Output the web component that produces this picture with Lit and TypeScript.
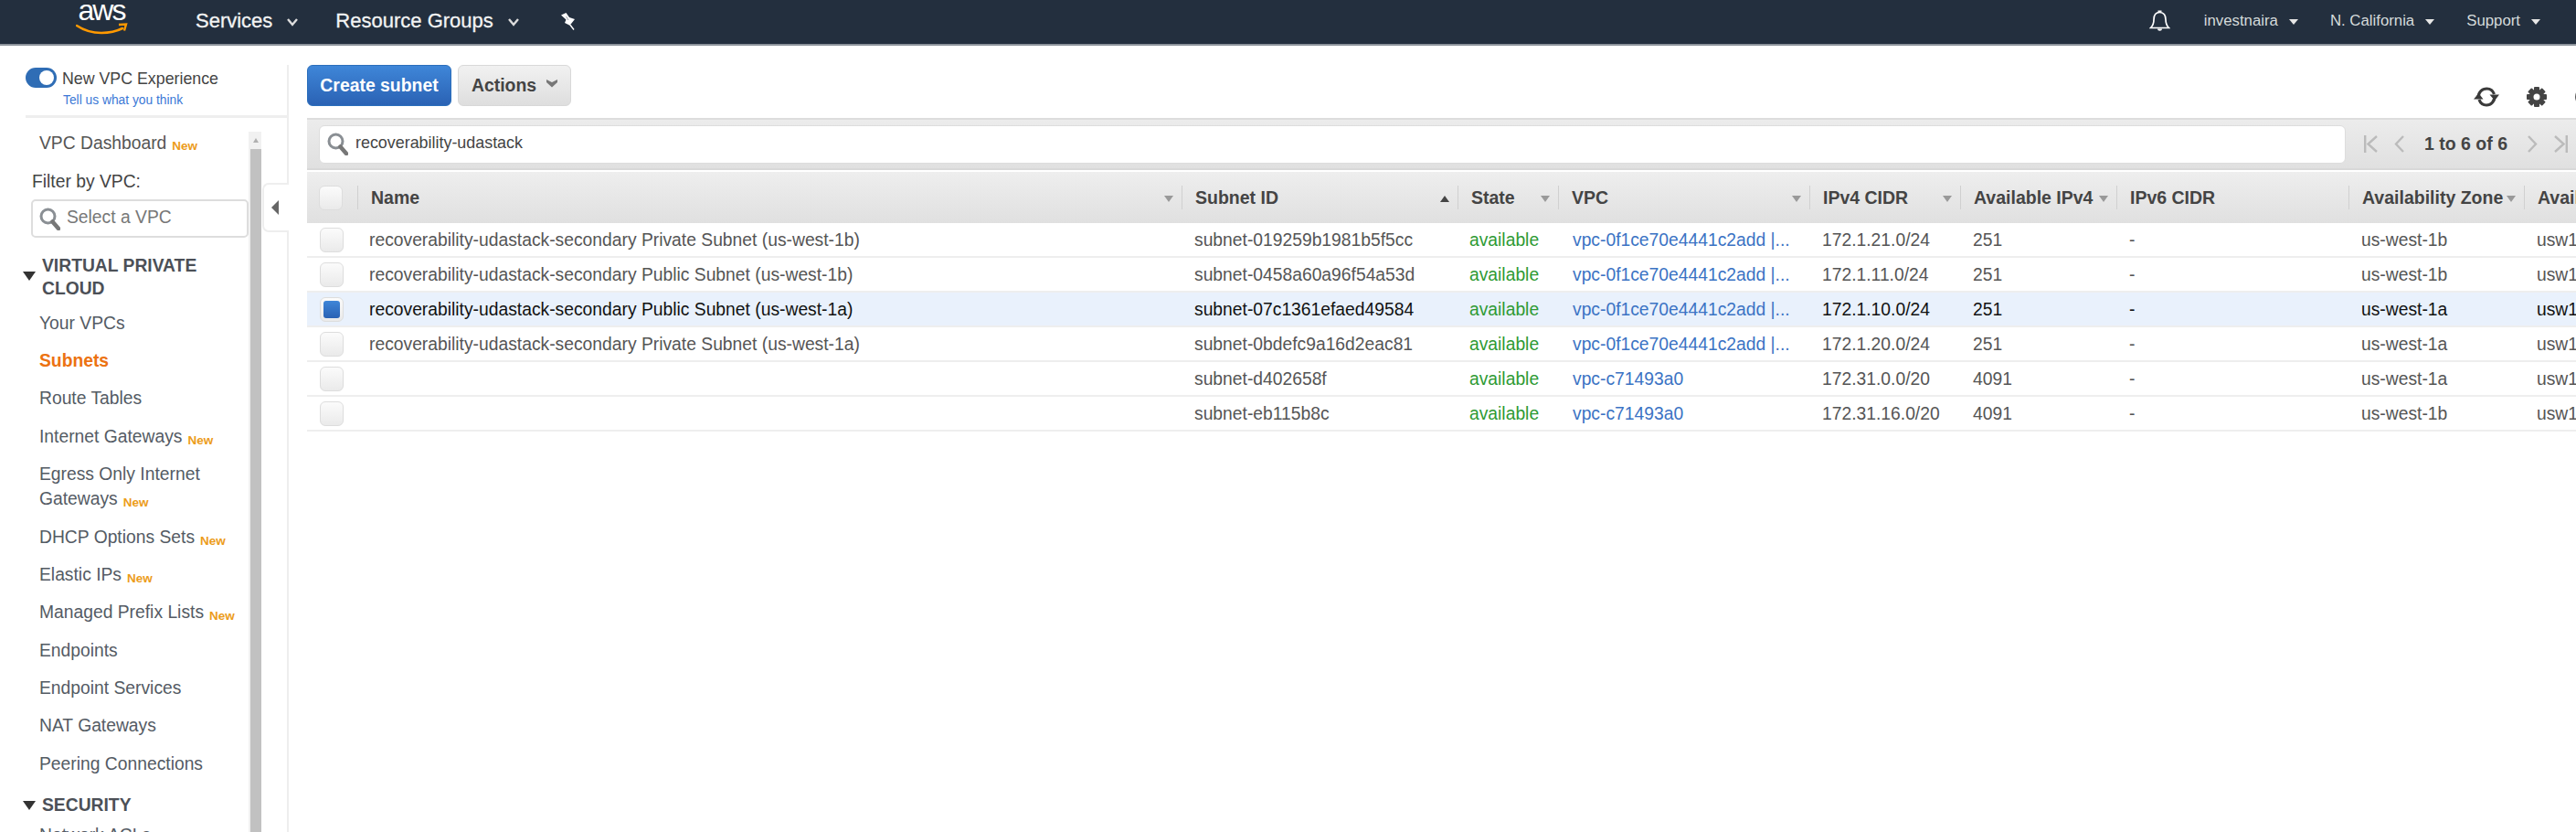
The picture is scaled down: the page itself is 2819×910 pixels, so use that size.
import { LitElement, html, css } from "lit";
import { customElement } from "lit/decorators.js";

const search = (w: number, h: number) => html`<svg class="mag" width=${w} height=${h} viewBox="0 0 23 25"><circle cx="9.5" cy="9.5" r="7.5" fill="none" stroke="#8a8f94" stroke-width="3"/><path d="M14.5 15.5 21 23" stroke="#777" stroke-width="4.5" stroke-linecap="round"/></svg>`;
const caret = (cls = "") => html`<span class="sortc ${cls}"></span>`;

const cols = [
  ["Name", ""], ["Subnet ID", "up"], ["State", ""], ["VPC", ""], ["IPv4 CIDR", ""],
  ["Available IPv4", ""], ["IPv6 CIDR", "none"], ["Availability Zone", ""], ["Avail", "none"],
];
const VL = "vpc-0f1ce70e4441c2add |...";
const rows = [
  ["recoverability-udastack-secondary Private Subnet (us-west-1b)", "subnet-019259b1981b5f5cc", VL, "172.1.21.0/24", "251", "us-west-1b"],
  ["recoverability-udastack-secondary Public Subnet (us-west-1b)", "subnet-0458a60a96f54a53d", VL, "172.1.11.0/24", "251", "us-west-1b"],
  ["recoverability-udastack-secondary Public Subnet (us-west-1a)", "subnet-07c1361efaed49584", VL, "172.1.10.0/24", "251", "us-west-1a"],
  ["recoverability-udastack-secondary Private Subnet (us-west-1a)", "subnet-0bdefc9a16d2eac81", VL, "172.1.20.0/24", "251", "us-west-1a"],
  ["", "subnet-d402658f", "vpc-c71493a0", "172.31.0.0/20", "4091", "us-west-1a"],
  ["", "subnet-eb115b8c", "vpc-c71493a0", "172.31.16.0/20", "4091", "us-west-1b"],
];
const nav = [
  ["Your VPCs", 0], ["Subnets", 0, "active"], ["Route Tables", 0], ["Internet Gateways", 1],
  ["Egress Only Internet Gateways", 1, "two"], ["DHCP Options Sets", 1], ["Elastic IPs", 1],
  ["Managed Prefix Lists", 1], ["Endpoints", 0], ["Endpoint Services", 0], ["NAT Gateways", 0], ["Peering Connections", 0],
] as const;

@customElement("app-root")
export class AppRoot extends LitElement {
  static styles = css`
    :host { display: block; width: 2819px; height: 910px; overflow: hidden; background: #fff; font-family: "Liberation Sans", Arial, sans-serif; color: #444; }
    * { box-sizing: border-box; }
    .top { height: 50px; background: #232f3e; border-bottom: 2px solid #8d949c; display: flex; align-items: center; color: #eee; padding-bottom: 3px; }
    .logo { width: 56px; margin-left: 83px; height: 48px; position: relative; flex: none; align-self: flex-start; }
    .logo b { display: block; font: 400 32px/33px "Liberation Sans", sans-serif; color: #fff; text-align: center; margin-top: -5px; letter-spacing: -2px; }
    .logo svg { position: absolute; left: 0; top: 25px; }
    .svc { font-size: 22px; font-weight: 400; color: #f2f3f3; -webkit-text-stroke: 0.3px #f2f3f3; margin-left: 75px; display: flex; align-items: center; }
    .svc svg { margin-left: 16px; margin-top: 4px; }
    .svc.rg { margin-left: 41px; }
    .pin { margin-left: 45px; }
    .right { margin-left: auto; display: flex; align-items: center; font-size: 16.8px; color: #d5dbdb; padding-right: 39px; }
    .right span.t { display: flex; align-items: center; }
    .right i { display: block; width: 0; height: 0; border: 5px solid transparent; border-top: 6px solid #e6e6e6; border-bottom: 0; margin-left: 12px; margin-top: 2px; }
    .bell { margin-right: 37px; }
    .right .g1 { margin-right: 35px; }
    .body { display: flex; height: 860px; }
    .side { width: 316px; flex: none; border-right: 2px solid #eee; margin-top: 21px; position: relative; display: flex; flex-direction: column; padding-left: 28px; }
    .tog { height: 58px; border-bottom: 3px solid #eee; display: flex; margin-right: -2px; flex: none; }
    .switch { width: 34px; height: 22px; background: #2f6db5; border-radius: 11px; position: relative; margin-top: 3px; flex: none; }
    .switch::after { content: ""; position: absolute; right: 3px; top: 3px; width: 16px; height: 16px; border-radius: 50%; background: #fff; }
    .tt { margin-left: 6px; }
    .tt div { font-size: 17.8px; line-height: 26px; margin-top: 2px; color: #444; }
    .tt a { display: block; font-size: 13.8px; line-height: 18px; color: #3b78d6; margin-top: 2px; margin-left: 1px; }
    .sb { flex: 1; display: flex; min-height: 0; margin-top: 15px; margin-left: -28px; overflow: hidden; }
    .nav { width: 272px; flex: none; overflow: hidden; }
    .scroll { width: 14px; flex: none; background: #f1f1f1; padding-left: 2px; display: flex; flex-direction: column; align-items: stretch; }
    .scroll .up { height: 19px; position: relative; background: #f1f1f1; }
    .scroll .up::after { content: ""; position: absolute; left: 3px; top: 7px; border: 3.5px solid transparent; border-bottom: 5px solid #b0b0b0; border-top: 0; }
    .scroll .th { flex: 1; background: #c1c1c1; }
    .dash { margin: -4px 0 0 43px; height: 34px; display: flex; align-items: center; font-size: 19.3px; color: #555; }
    .new { color: #ec9c1a; font-weight: 700; font-size: 13.5px; margin-left: 6px; position: relative; top: 2px; }
    .fl { margin: 12px 0 0 35px; font-size: 19.3px; line-height: 26px; color: #444; }
    .sel { margin: 6px 0 0 34px; width: 238px; height: 42px; border: 2px solid #ddd; border-radius: 5px; display: flex; align-items: center; padding-left: 7px; color: #777; font-size: 19.3px; }
    .sel span { margin-left: 7px; margin-top: -2px; }
    .grp { display: flex; margin: 18px 0 5px 25px; color: #4c5057; font-weight: 700; font-size: 19.3px; line-height: 25px; }
    .grp i { display: block; flex: none; width: 0; height: 0; border: 7px solid transparent; border-top: 10px solid #333; border-bottom: 0; margin-top: 19px; margin-right: 7px; }
    .grp.s { margin-top: 12px; margin-bottom: 0; }
    .grp.s i { margin-top: 8px; }
    .item { height: 41.3px; margin-left: 43px; display: flex; align-items: center; font-size: 19.3px; color: #545b64; white-space: nowrap; }
    .item.two { height: 69px; white-space: normal; line-height: 27px; display: block; padding-top: 7px; width: 222px; }
    .item.active { color: #ec7211; font-weight: 700; }
    .handle { position: absolute; left: 287px; top: 129px; width: 29px; height: 54px; border: 2px solid #eee; border-right: 0; border-radius: 7px 0 0 7px; background: #fff; display: flex; align-items: center; padding-left: 8px; }
    .handle::after { content: ""; border: 8px solid transparent; border-right: 8px solid #666; border-left: 0; }
    .main { flex: 1; min-width: 0; padding: 21px 0 0 20px; overflow: hidden; }
    .actions { display: flex; height: 45px; margin-bottom: 13px; }
    .btn { height: 45px; border-radius: 6px; font-size: 19.4px; font-weight: 700; display: flex; align-items: center; justify-content: center; }
    .create { width: 158px; background: linear-gradient(#3f86d8, #2a62b4); color: #fff; border: 1px solid #2a6ebb; }
    .act { width: 124px; margin-left: 7px; background: linear-gradient(#f1f1f1, #dedede); border: 1.5px solid #d8d8d8; color: #444; }
    .act svg { margin-left: 11px; margin-top: -5px; }
    .tools { margin-left: auto; display: flex; align-items: center; padding: 24px 0 0 7px; width: 120px; flex: none; }
    .tools svg { flex: none; }
    .gear { margin-left: 29px; }
    .cut { margin-left: 31px; }
    .bar { height: 57px; width: 2483px; background: linear-gradient(#ececec, #e0e0e0); border-top: 2px solid #ddd; border-bottom: 2px solid #d8d8d8; display: flex; align-items: center; padding-left: 13px; }
    .q { width: 2218px; height: 42px; background: #fff; border: 1.5px solid #ddd; border-radius: 6px; display: flex; align-items: center; padding-left: 8px; font-size: 17.9px; color: #444; flex: none; }
    .q span { margin-left: 8px; margin-top: -2px; }
    .pg { display: flex; align-items: center; margin-left: 20px; color: #444; }
    .pg svg { flex: none; }
    .pg b { font-size: 19.5px; margin: 0 22px 0 22px; font-weight: 700; white-space: nowrap; }
    .pg svg + svg { margin-left: 18px; }
    .grid { display: grid; grid-template-columns: 55px 902px 302px 110px 275px 165px 171px 254px 192px 100px; width: 2526px; }
    .hd { margin-top: 2px; height: 56px; background: linear-gradient(#eeeeee, #e0e0e0); align-items: center; }
    .hd > div { height: 26px; display: flex; align-items: center; border-left: 1.5px solid #d0d0d0; padding-left: 14px; padding-right: 9px; font-size: 19.5px; font-weight: 700; color: #444; white-space: nowrap; }
    .hd > div:first-child { border: 0; padding: 0 0 0 13px; }
    .sortc { margin-left: auto; border: 5px solid transparent; border-top: 7px solid #999; border-bottom: 0; flex: none; margin-top: 2px; }
    .sortc.up { border-top: 0; border-bottom: 7px solid #444; }
    .sortc.none { display: none; }
    .row { height: 38px; border-bottom: 2px solid #eee; align-items: center; font-size: 19.3px; color: #555; white-space: nowrap; }
    .row > div { padding-left: 14px; padding-top: 2px; overflow: hidden; }
    .row > div:nth-child(2) { padding-left: 13px; }
    .row > div:first-child { padding: 0 0 0 14px; overflow: visible; display: flex; }
    .row.on { background: #e9f1fc; color: #111; }
    .avail { color: #2e9a34; }
    .row > div.avail { padding-left: 13px; }
    .row a { color: #3b73c4; margin-left: 2px; }
    .cb { width: 26px; height: 27px; border: 1.5px solid #ddd; border-radius: 6px; background: linear-gradient(#fbfbfb, #eaeaea); display: block; position: relative; }
    .on .cb::after { content: ""; position: absolute; left: 3px; top: 3px; right: 3px; bottom: 3px; background: linear-gradient(#3f86d8, #2a62b4); border-radius: 3px; }
  `;

  render() {
    return html`
      <div class="top">
        <div class="logo"><b>aws</b><svg width="57" height="14" viewBox="0 0 57 14"><path d="M1 3c9 6 18 8 27 8 9 0 17-2 23-5" fill="none" stroke="#f90" stroke-width="2.6" stroke-linecap="round"/><path d="M47 2l8-.5-2 7" fill="none" stroke="#f90" stroke-width="2.4"/></svg></div>
        <div class="svc">Services<svg width="12" height="9" viewBox="0 0 12 9"><path d="M1 1l5 6 5-6" fill="none" stroke="#ddd" stroke-width="2.4"/></svg></div>
        <div class="svc rg">Resource Groups<svg width="12" height="9" viewBox="0 0 12 9"><path d="M1 1l5 6 5-6" fill="none" stroke="#ddd" stroke-width="2.4"/></svg></div>
        <svg class="pin" width="17" height="20" viewBox="0 0 17 20"><path d="M1 3.500 6.500 1l3.500 5 6 2-4 5-2 1.500-5-2.500 1.500-3.500z" fill="#fff"/><path d="M10 13l5 6.500" stroke="#fff" stroke-width="1.400"/><path d="M6.500 5l2.500 4" stroke="#9aa0a8" stroke-width="1"/></svg>
        <div class="right">
          <svg class="bell" width="23" height="24" viewBox="0 0 23 24"><path d="M11.500 2.500c-4.500 0-6.500 3.500-6.500 8 0 4.500-1.500 7-3.500 9h20c-2-2-3.500-4.500-3.500-9 0-4.500-2-8-6.500-8z" fill="none" stroke="#fff" stroke-width="1.700"/><path d="M9.500 1.500h4" stroke="#fff" stroke-width="2"/><path d="M9 20.500c0 3 5 3 5 0z" fill="#fff"/></svg>
          <span class="t g1">investnaira<i></i></span>
          <span class="t g1">N. California<i></i></span>
          <span class="t">Support<i></i></span>
        </div>
      </div>
      <div class="body">
        <div class="side">
          <div class="tog"><div class="switch"></div><div class="tt"><div>New VPC Experience</div><a>Tell us what you think</a></div></div>
          <div class="sb">
            <div class="nav">
              <div class="dash">VPC Dashboard<span class="new">New</span></div>
              <div class="fl">Filter by VPC:</div>
              <div class="sel">${search(23, 25)}<span>Select a VPC</span></div>
              <div class="grp"><i></i><div>VIRTUAL PRIVATE<br />CLOUD</div></div>
              ${nav.map((n) => html`<div class="item ${(n as any)[2] ?? ""}"><span>${n[0]}${n[1] ? html`<span class="new">New</span>` : ""}</span></div>`)}
              <div class="grp s"><i></i><div>SECURITY</div></div>
              <div class="item">Network ACLs</div>
            </div>
            <div class="scroll"><div class="up"></div><div class="th"></div></div>
          </div>
          <div class="handle"></div>
        </div>
        <div class="main">
          <div class="actions">
            <div class="btn create">Create subnet</div>
            <div class="btn act">Actions<svg width="12" height="9" viewBox="0 0 12 9"><path d="M0 0l6 3 6-3v3L6 8.500 0 3z" fill="#777"/></svg></div>
            <div class="tools">
              <svg width="30" height="22" viewBox="0 0 30 22"><path d="M6 12C6 6 10 2 15.500 2 19 2 22 4 23.500 8M24 10c0 6-4 10-9 10-3.500 0-6.500-2-8-6" fill="none" stroke="#3a3a3a" stroke-width="3.200"/><path d="M18.500 8.500h10.500l-5 6.500zM1 13.500h10.500L6.500 7z" fill="#3a3a3a"/></svg>
              <svg class="gear" width="22" height="22" viewBox="-11 -11 22 22"><g fill="#444"><rect x="-3" y="-11" width="6" height="22" rx="1"/><rect x="-3" y="-11" width="6" height="22" rx="1" transform="rotate(45)"/><rect x="-3" y="-11" width="6" height="22" rx="1" transform="rotate(90)"/><rect x="-3" y="-11" width="6" height="22" rx="1" transform="rotate(135)"/><circle r="8"/></g><circle r="3.500" fill="#fff"/></svg>
              <svg class="cut" width="22" height="22" viewBox="0 0 22 22"><circle cx="11" cy="11" r="9.500" fill="none" stroke="#555" stroke-width="3"/></svg>
            </div>
          </div>
          <div class="bar">
            <div class="q">${search(23, 25)}<span>recoverability-udastack</span></div>
            <div class="pg">
              <svg width="15" height="19" viewBox="0 0 15 19"><path d="M1.200 0v19M14 1L4.500 9.500 14 18" fill="none" stroke="#bbb" stroke-width="2.400"/></svg>
              <svg width="11" height="19" viewBox="0 0 11 19"><path d="M10 1L2 9.500l8 8.500" fill="none" stroke="#bbb" stroke-width="2.400"/></svg>
              <b>1 to 6 of 6</b>
              <svg width="11" height="19" viewBox="0 0 11 19"><path d="M1 1l8 8.500L1 18" fill="none" stroke="#bbb" stroke-width="2.400"/></svg>
              <svg width="15" height="19" viewBox="0 0 15 19"><path d="M13.800 0v19M1 1l9.500 8.500L1 18" fill="none" stroke="#bbb" stroke-width="2.400"/></svg>
            </div>
          </div>
          <div class="grid hd">
            <div><span class="cb"></span></div>
            ${cols.map(([c, k]) => html`<div>${c}${caret(k)}</div>`)}
          </div>
          ${rows.map((r, i) => html`<div class="grid row ${i === 2 ? "on" : ""}">
            <div><span class="cb"></span></div>
            <div>${r[0]}</div><div>${r[1]}</div><div class="avail">available</div><div><a>${r[2]}</a></div>
            <div>${r[3]}</div><div>${r[4]}</div><div>-</div><div>${r[5]}</div><div>usw1-az1</div>
          </div>`)}
        </div>
      </div>
    `;
  }
}
